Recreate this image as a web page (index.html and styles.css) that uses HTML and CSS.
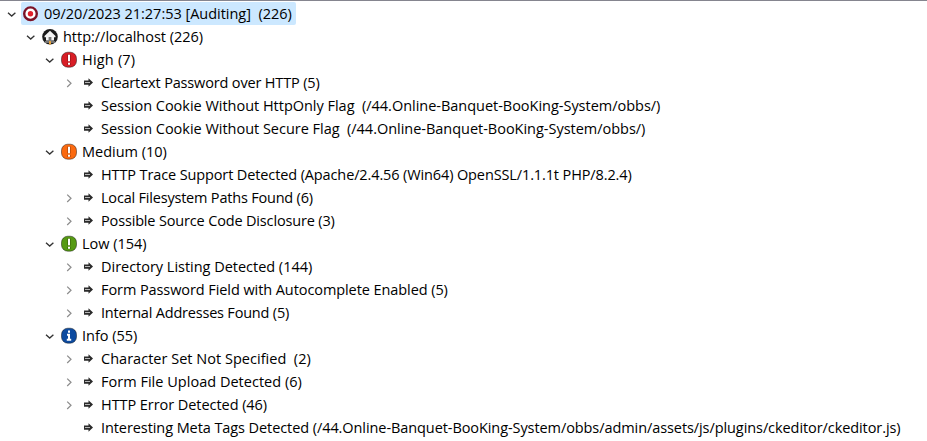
FILE: index.html
```
<!DOCTYPE html>
<html lang="en">
<head>
<meta charset="utf-8">
<title>Scan Alerts</title>
<link rel="stylesheet" href="styles.css">
</head>
<body>
<svg class="sprite" aria-hidden="true">
  <symbol id="open" viewBox="0 0 18 18"><path d="M5 7.700 8.700 11.100 12.400 7.700" fill="none" stroke="#333" stroke-width="1.300"/></symbol>
  <symbol id="closed" viewBox="0 0 18 18"><path d="M7.200 5.600 11 9.300 7.200 13" fill="none" stroke="#8c8c8c" stroke-width="1.200"/></symbol>
  <symbol id="arrow" viewBox="0 0 18 18"><path d="M6 6.500h4.500V4.300L15 8.500l-4.500 4.200v-2H6z" fill="#2b2b2b"/><path d="M7 8.500h5" stroke="#b5b5b5"/></symbol>
  <symbol id="target" viewBox="0 0 18 18"><circle cx="9.500" cy="8.700" r="6.300" fill="#fff" stroke="#7b1226" stroke-width="2.400"/><circle cx="9.500" cy="8.700" r="2.700" fill="#e0202c"/></symbol>
  <symbol id="home" viewBox="0 0 18 18"><circle cx="10" cy="8.700" r="7.800" fill="#1c1c1c"/><path d="M10 2.800 4.500 8v1.200H6V12.500h8V9.200h1.500V8z" fill="#f4f4f4"/><path d="M8.600 12.500V9h2.800v3.500z" fill="#777"/><path d="M5 14h10" stroke="#ccc"/><path d="M9 13h2v3.500H9z" fill="#e5a13b"/></symbol>
  <symbol id="alert" viewBox="0 0 18 18"><rect x="2.500" y="1.200" width="15" height="15" rx="6.200" fill="currentColor" stroke="#000" stroke-opacity=".42"/><path d="M10 3.500v7M10 11.800v2.200" stroke="#000" stroke-opacity=".22" stroke-width="4"/><path d="M10 3.800v6.400M10 11.700v2" stroke="#fff" stroke-width="2"/></symbol>
  <symbol id="info" viewBox="0 0 18 18"><rect x="2.500" y="1.200" width="15" height="15" rx="6.200" fill="currentColor" stroke="#000" stroke-opacity=".42"/><path d="M10 3.500v2.200M8 7.700h2v4.800M7.800 12.700h4.400" fill="none" stroke="#fff" stroke-width="2"/></symbol>
</svg>
<main class="tree">
  <div class="row"><svg class="icon"><use href="#open"/></svg><div class="item selected"><svg class="icon"><use href="#target"/></svg><span class="name">09/20/2023 21:27:53 [Auditing]  (226)</span></div></div>
  <div class="branch">
    <div class="row"><svg class="icon"><use href="#open"/></svg><div class="item"><svg class="icon"><use href="#home"/></svg><span class="name">http://localhost (226)</span></div></div>
    <div class="branch">
      <div class="row"><svg class="icon"><use href="#open"/></svg><div class="item"><svg class="icon high"><use href="#alert"/></svg><span class="name wide-3">High (7)</span></div></div>
      <div class="branch">
        <div class="row"><svg class="icon"><use href="#closed"/></svg><div class="item"><svg class="icon"><use href="#arrow"/></svg><span class="name tight-4">Cleartext Password over HTTP (5)</span></div></div>
        <div class="row"><i class="icon"></i><div class="item"><svg class="icon"><use href="#arrow"/></svg><span class="name">Session Cookie Without HttpOnly Flag  (/44.Online-Banquet-BooKing-System/obbs/)</span></div></div>
        <div class="row"><i class="icon"></i><div class="item"><svg class="icon"><use href="#arrow"/></svg><span class="name">Session Cookie Without Secure Flag  (/44.Online-Banquet-BooKing-System/obbs/)</span></div></div>
      </div>
      <div class="row"><svg class="icon"><use href="#open"/></svg><div class="item"><svg class="icon medium"><use href="#alert"/></svg><span class="name">Medium (10)</span></div></div>
      <div class="branch">
        <div class="row"><i class="icon"></i><div class="item"><svg class="icon"><use href="#arrow"/></svg><span class="name tight-3">HTTP Trace Support Detected (Apache/2.4.56 (Win64) OpenSSL/1.1.1t PHP/8.2.4)</span></div></div>
        <div class="row"><svg class="icon"><use href="#closed"/></svg><div class="item"><svg class="icon"><use href="#arrow"/></svg><span class="name tight-5">Local Filesystem Paths Found (6)</span></div></div>
        <div class="row"><svg class="icon"><use href="#closed"/></svg><div class="item"><svg class="icon"><use href="#arrow"/></svg><span class="name tight-4">Possible Source Code Disclosure (3)</span></div></div>
      </div>
      <div class="row"><svg class="icon"><use href="#open"/></svg><div class="item"><svg class="icon low"><use href="#alert"/></svg><span class="name">Low (154)</span></div></div>
      <div class="branch">
        <div class="row"><svg class="icon"><use href="#closed"/></svg><div class="item"><svg class="icon"><use href="#arrow"/></svg><span class="name">Directory Listing Detected (144)</span></div></div>
        <div class="row"><svg class="icon"><use href="#closed"/></svg><div class="item"><svg class="icon"><use href="#arrow"/></svg><span class="name tight-2">Form Password Field with Autocomplete Enabled (5)</span></div></div>
        <div class="row"><svg class="icon"><use href="#closed"/></svg><div class="item"><svg class="icon"><use href="#arrow"/></svg><span class="name tight-5">Internal Addresses Found (5)</span></div></div>
      </div>
      <div class="row"><svg class="icon"><use href="#open"/></svg><div class="item"><svg class="icon notice"><use href="#info"/></svg><span class="name">Info (55)</span></div></div>
      <div class="branch">
        <div class="row"><svg class="icon"><use href="#closed"/></svg><div class="item"><svg class="icon"><use href="#arrow"/></svg><span class="name wide-1">Character Set Not Specified  (2)</span></div></div>
        <div class="row"><svg class="icon"><use href="#closed"/></svg><div class="item"><svg class="icon"><use href="#arrow"/></svg><span class="name wide-1">Form File Upload Detected (6)</span></div></div>
        <div class="row"><svg class="icon"><use href="#closed"/></svg><div class="item"><svg class="icon"><use href="#arrow"/></svg><span class="name tight-1">HTTP Error Detected (46)</span></div></div>
        <div class="row"><i class="icon"></i><div class="item"><svg class="icon"><use href="#arrow"/></svg><span class="name tight-2">Interesting Meta Tags Detected (/44.Online-Banquet-BooKing-System/obbs/admin/assets/js/plugins/ckeditor/ckeditor.js)</span></div></div>
      </div>
    </div>
  </div>
</main>
</body>
</html>
```
FILE: styles.css
```
body {
  margin: 0;
  overflow: hidden;
  background: #fff;
  color: #000;
  font: 14.5px/23px "Open Sans", sans-serif;
}
.sprite { display: none; }
.tree {
  border-top: 1px solid #85858f;
  padding: 1px 0 0 3px;
}
.branch { padding-left: 19px; }
.row { display: flex; align-items: center; height: 23px; }
.item {
  display: flex;
  align-items: center;
  height: 23px;
  padding-right: 4px;
  border-radius: 2px;
}
.selected { background: #cce8ff; }
.icon { width: 18px; height: 18px; flex: none; }
.name { margin-left: 5px; white-space: pre; letter-spacing: -0.02px; }
.high { color: #d81e26; }
.medium { color: #fb6a10; }
.low { color: #569a13; }
.notice { color: #0d4ba0; }
.tight-1 { letter-spacing: -0.06px; }
.tight-2 { letter-spacing: -0.08px; }
.tight-3 { letter-spacing: -0.12px; }
.tight-4 { letter-spacing: -0.16px; }
.tight-5 { letter-spacing: -0.2px; }
.wide-1 { letter-spacing: 0.02px; }
.wide-3 { letter-spacing: 0.2px; }
```
